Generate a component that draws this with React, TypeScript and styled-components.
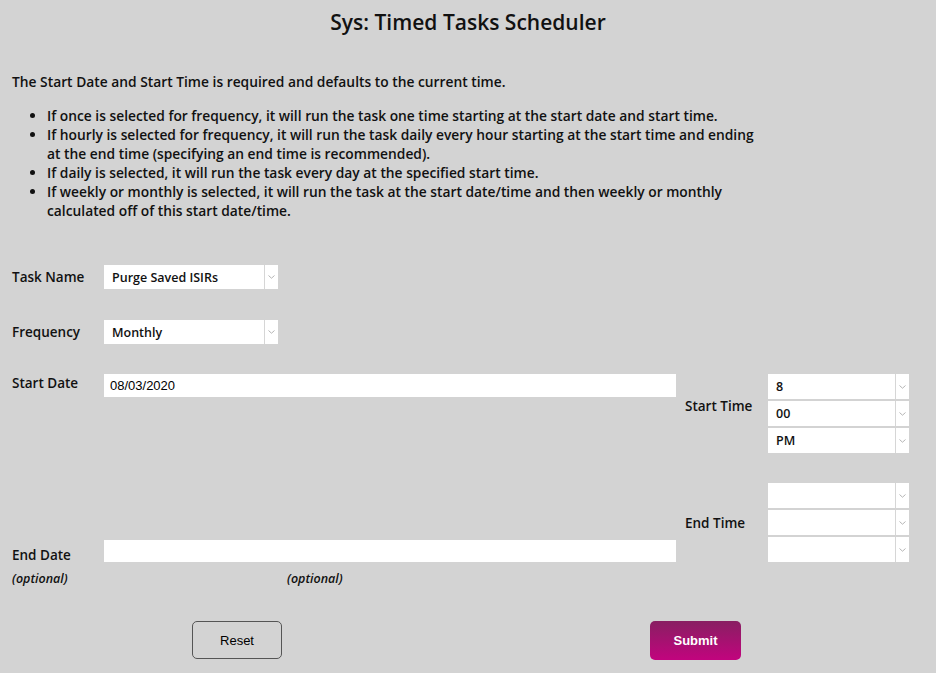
import React from "react";
import styled, { createGlobalStyle } from "styled-components";

const GlobalStyle = createGlobalStyle`
  html, body { margin: 0; padding: 0; background: #d3d3d3; }
  body { font-family: "Open Sans", Lato, sans-serif; color: #111; }
  * { box-sizing: border-box; }
`;

const Page = styled.div`
  width: 936px;
  height: 673px;
  background: #d3d3d3;
  padding: 0 12px;
  overflow: hidden;
`;

const Title = styled.h1`
  margin: 0;
  padding-top: 9px;
  height: 44px;
  text-align: center;
  font-size: 21px;
  font-weight: 600;
  line-height: 26px;
`;

const Intro = styled.p`
  margin: 28px 0 0;
  font-size: 13.8px;
  font-weight: 600;
  line-height: 19px;
`;

const Bullets = styled.ul`
  margin: 15px 0 0;
  padding-left: 35px;
  width: 745px;
  font-size: 13.8px;
  font-weight: 600;
  line-height: 19px;
  li { padding-left: 0; }
`;

const FieldRow = styled.div<{ $top: number }>`
  display: grid;
  grid-template-columns: 92px 174px;
  align-items: center;
  margin-top: ${(p) => p.$top}px;
`;

const Label = styled.div`
  font-size: 13.5px;
  font-weight: 600;
  line-height: 18px;
`;

const SelectBox = styled.div<{ $h?: number }>`
  display: flex;
  height: ${(p) => p.$h ?? 24}px;
  background: #fff;
`;

const SelectValue = styled.div`
  flex: 1;
  display: flex;
  align-items: center;
  padding-left: 8px;
  font-size: 12.5px;
  font-weight: 600;
  border-right: 1px solid #d6d6d6;
`;

const SelectArrow = styled.div`
  width: 13px;
  display: flex;
  align-items: center;
  justify-content: center;
`;

const Chevron = () => (
  <svg width="7" height="4" viewBox="0 0 7 4">
    <path d="M0.5 0.5 L3.5 3.2 L6.5 0.5" fill="none" stroke="#b5b5b5" strokeWidth="1" />
  </svg>
);

const Select = ({ value, h }: { value?: string; h?: number }) => (
  <SelectBox $h={h}>
    <SelectValue>{value}</SelectValue>
    <SelectArrow>
      <Chevron />
    </SelectArrow>
  </SelectBox>
);

const DateGrid = styled.div`
  display: grid;
  grid-template-columns: 92px 572px 92px 141px;
  grid-template-rows: 79px 109px 28px;
  margin-top: 30px;
  width: 897px;
`;

const DateLabel = styled(Label)<{ $align: "start" | "end" }>`
  align-self: ${(p) => p.$align};
  padding-top: ${(p) => (p.$align === "end" ? 4 : 0)}px;
  margin-bottom: ${(p) => (p.$align === "end" ? -4 : 0)}px;
  line-height: ${(p) => (p.$align === "end" ? 22 : 18)}px;
`;

const DateInput = styled.div<{ $align: "start" | "end" }>`
  align-self: ${(p) => p.$align};
  height: ${(p) => (p.$align === "start" ? 23 : 22)}px;
  background: #fff;
  display: flex;
  align-items: center;
  padding-left: 6px;
  font-family: "Liberation Sans", Arial, sans-serif;
  font-size: 13px;
  color: #000;
`;

const TimeLabel = styled(Label)<{ $shift: number }>`
  align-self: center;
  padding-left: 9px;
  margin-top: ${(p) => p.$shift}px;
`;

const TimeStack = styled.div`
  align-self: end;
  display: flex;
  flex-direction: column;
  gap: 2px;
`;

const Optional = styled.div<{ $indent: number }>`
  align-self: center;
  padding-top: 4px;
  padding-left: ${(p) => p.$indent}px;
  font-size: 12.5px;
  font-weight: 600;
  font-style: italic;
`;

const Buttons = styled.div`
  display: flex;
  margin-top: 31px;
  padding-left: 180px;
  gap: 368px;
`;

const Button = styled.button<{ $primary?: boolean }>`
  width: ${(p) => (p.$primary ? 91 : 90)}px;
  height: ${(p) => (p.$primary ? 39 : 38)}px;
  border-radius: 5px;
  font-family: "Liberation Sans", Arial, sans-serif;
  font-size: 13px;
  font-weight: ${(p) => (p.$primary ? 700 : 400)};
  color: ${(p) => (p.$primary ? "#fff" : "#000")};
  background: ${(p) =>
    p.$primary ? "linear-gradient(to bottom, #881f62, #c2047e)" : "transparent"};
  border: ${(p) => (p.$primary ? "none" : "1px solid #555")};
  cursor: pointer;
`;

export default function App() {
  return (
    <Page>
      <GlobalStyle />
      <Title>Sys: Timed Tasks Scheduler</Title>
      <Intro>The Start Date and Start Time is required and defaults to the current time.</Intro>
      <Bullets>
        <li>If once is selected for frequency, it will run the task one time starting at the start date and start time.</li>
        <li>
          If hourly is selected for frequency, it will run the task daily every hour starting at the start time and ending at
          the end time (specifying an end time is recommended).
        </li>
        <li>If daily is selected, it will run the task every day at the specified start time.</li>
        <li>
          If weekly or monthly is selected, it will run the task at the start date/time and then weekly or monthly calculated
          off of this start date/time.
        </li>
      </Bullets>
      <FieldRow $top={45}>
        <Label>Task Name</Label>
        <Select value="Purge Saved ISIRs" />
      </FieldRow>
      <FieldRow $top={31}>
        <Label>Frequency</Label>
        <Select value="Monthly" />
      </FieldRow>
      <DateGrid>
        <DateLabel $align="start">Start Date</DateLabel>
        <DateInput $align="start">08/03/2020</DateInput>
        <TimeLabel $shift={-16}>Start Time</TimeLabel>
        <TimeStack>
          <Select h={25} value="8" />
          <Select h={25} value="00" />
          <Select h={25} value="PM" />
        </TimeStack>
        <DateLabel $align="end">End Date</DateLabel>
        <DateInput $align="end" />
        <TimeLabel $shift={31}>End Time</TimeLabel>
        <TimeStack>
          <Select h={25} />
          <Select h={25} />
          <Select h={25} />
        </TimeStack>
        <Optional $indent={0}>(optional)</Optional>
        <Optional $indent={183}>(optional)</Optional>
      </DateGrid>
      <Buttons>
        <Button>Reset</Button>
        <Button $primary>Submit</Button>
      </Buttons>
    </Page>
  );
}
